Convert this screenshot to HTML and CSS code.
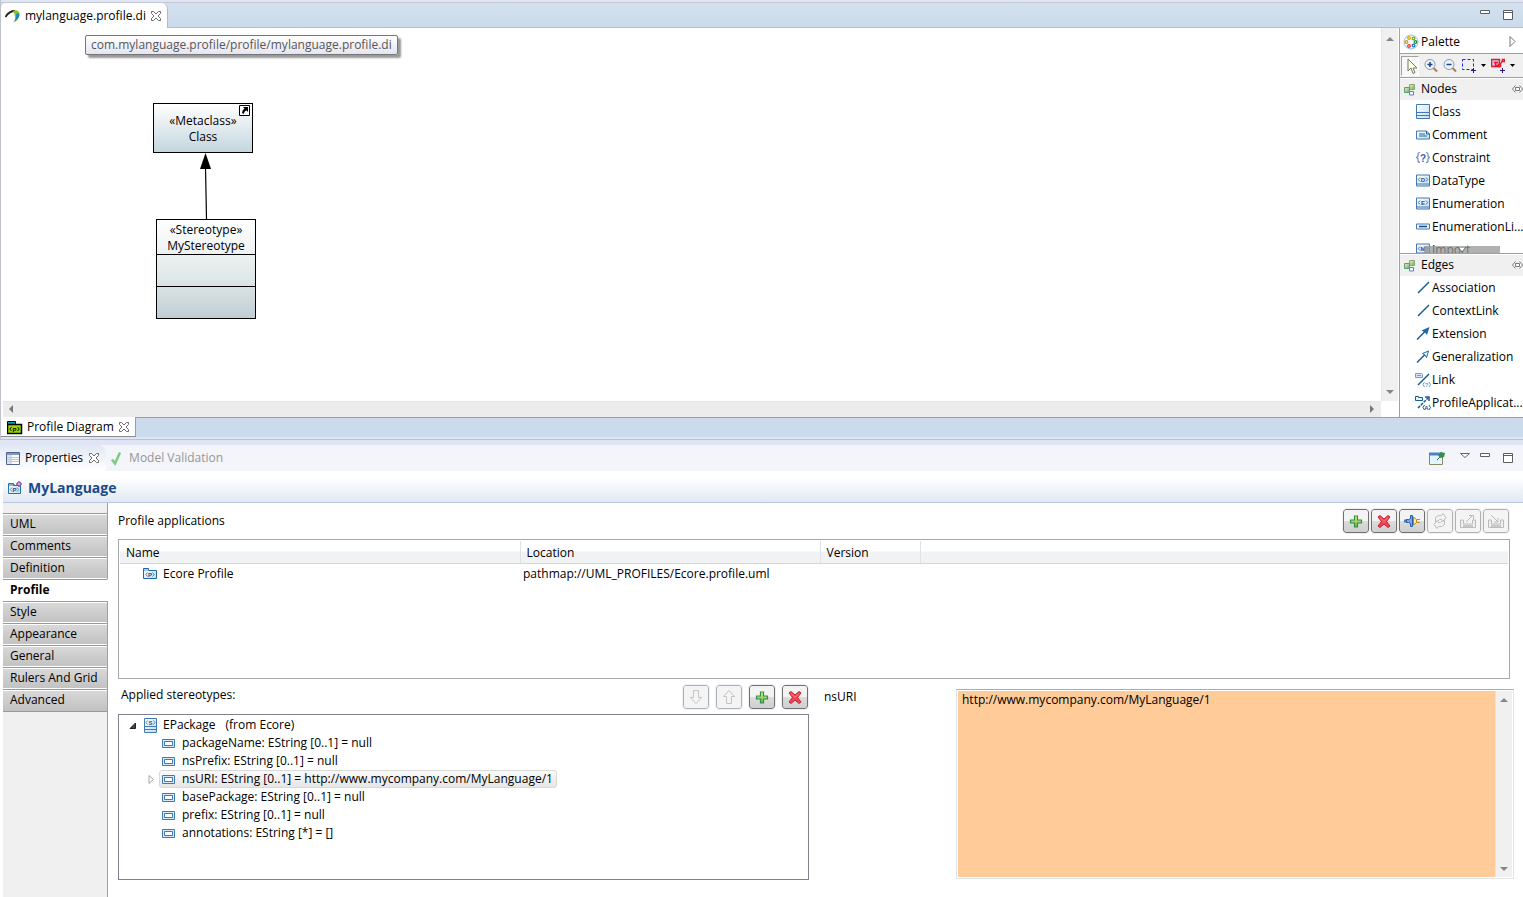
FILE: index.html
```html
<!DOCTYPE html>
<html lang="en">
<head>
<meta charset="utf-8">
<title>mylanguage.profile.di</title>
<link rel="stylesheet" href="styles.css">
</head>
<body>
<svg class="defs" aria-hidden="true">
  <defs>
    <linearGradient id="g-paper" x1="0" y1="0" x2="1" y2="1"><stop offset="0" stop-color="#fff"/><stop offset="1" stop-color="#c3dcf2"/></linearGradient>
    <linearGradient id="g-plus" x1="0" y1="0" x2="0" y2="1"><stop offset="0" stop-color="#e4ee7c"/><stop offset="1" stop-color="#6fb544"/></linearGradient>
    <linearGradient id="g-green" x1="0" y1="0" x2="1" y2="1"><stop offset="0" stop-color="#f2f3a8"/><stop offset="1" stop-color="#68a878"/></linearGradient>
  </defs>
  <symbol id="close" viewBox="0 0 12 12"><path d="M1.5 1.5h2L6 4l2.500-2.500h2v2L8 6l2.500 2.500v2h-2L6 8l-2.500 2.500h-2v-2L4 6 1.500 3.500z" fill="#fff" stroke="#6b6b6b"/></symbol>
  <symbol id="min" viewBox="0 0 12 12"><path d="M1.500 1.500h9v3h-9z" fill="#fff" stroke="#5e5e5e"/></symbol>
  <symbol id="max" viewBox="0 0 12 12"><path d="M1.500 1.500h9v9h-9zM1.500 3.500h9" fill="#fff" stroke="#5e5e5e"/></symbol>
  <symbol id="up" viewBox="0 0 8 4"><path d="M0 4L4 0l4 4z" fill="#858585"/></symbol>
  <symbol id="down" viewBox="0 0 8 4"><path d="M0 0h8L4 4z" fill="#858585"/></symbol>
  <symbol id="pin" viewBox="0 0 11 8"><path d="M3.500 .5L.5 4l3 3.500M7.500 .5l3 3.500-3 3.500M3.500 2.500h4v3h-4z" fill="#fff" stroke="#777"/></symbol>
  <symbol id="drawer" viewBox="0 0 12 13"><path d="M5.500 1.500h5v5h-5z" fill="url(#g-green)" stroke="#86ab7c"/><path d="M.5 4.500h5v5h-5z" fill="url(#g-green)" stroke="#5d9b79"/><path d="M5.500 8.500h4v3.500h-4z" fill="#eef7ff" stroke="#5d87b5"/></symbol>
  <symbol id="class" viewBox="0 0 14 15"><path d="M.5.5h13v14H.5zM.5 8.500h13M.5 11.500h13" fill="url(#g-paper)" stroke="#4379b3"/></symbol>
  <symbol id="comment" viewBox="0 0 14 14"><path d="M.5 3.500h10l3 3v5H.5z" fill="url(#g-paper)" stroke="#4379b3"/><path d="M10.500 3.500v3h3M3 6.500h6M3 8.500h8" fill="none" stroke="#1f64a0"/></symbol>
  <symbol id="literal" viewBox="0 0 14 14"><path d="M.5 4.500h13v5H.5z" fill="#eaf6ff" stroke="#4379b3"/><path d="M3 7h8" stroke="#14477c" stroke-width="1.500"/></symbol>
  <symbol id="framed" viewBox="0 0 14 14"><path d="M.5 1.500h13v11H.5zM1 10.500h12" fill="url(#g-paper)" stroke="#4379b3"/><path d="M4 4L2.300 6 4 8M10 4l1.700 2L10 8" fill="none" stroke="#244f91" stroke-width=".8"/></symbol>
  <symbol id="line" viewBox="0 0 14 14"><path d="M2 12.500L13 1.500" stroke="#155a91" stroke-width="1.500"/></symbol>
  <symbol id="extension" viewBox="0 0 14 14"><path d="M1 13L10 4" stroke="#155a91" stroke-width="1.500"/><path d="M13.500 .5L11 8.500 9 6 5.500 4z" fill="#1d68a5"/></symbol>
  <symbol id="general" viewBox="0 0 14 14"><path d="M1 13L9 5" stroke="#155a91" stroke-width="1.500"/><path d="M12.500 1.500L10.500 8 9 5.500 6.500 4z" fill="#fff" stroke="#1d68a5"/></symbol>
  <symbol id="attr" viewBox="0 0 13 9"><path d="M.5.5h12v8H.5z" fill="#d9ebfa" stroke="#3e79b3"/><path d="M2.500 2.500h8v4h-8z" fill="#fff" stroke="#3e79b3"/></symbol>
  <symbol id="plus" viewBox="0 0 14 14"><path d="M5.500 1.500h3v4h4v3h-4v4h-3v-4h-4v-3h4z" fill="url(#g-plus)" stroke="#2f9050" stroke-width="1.200"/></symbol>
  <symbol id="cross" viewBox="0 0 14 14"><path d="M1 2.500L3 1l4 3.500L11 1l2 1.500L9.500 7l3.500 4.500-2 1.500-4-3.500L3 13l-2-1.500L4.500 7z" fill="#f04452" stroke="#c91f31"/><path d="M3 3l4 4 4-4" fill="none" stroke="#f9877f"/></symbol>
  <symbol id="plug" viewBox="0 0 16 12"><path d="M0 4.500h3v3H0z" fill="#477ac4"/><path d="M2.500 4.500h2l2-1V.5h2v11h-2v-3l-2-1h-2z" fill="#7da5df" stroke="#285ba9"/><path d="M9.500 2l3 2.500v3l-3 2.500z" fill="#ffeaa0" stroke="#b9851b"/><path d="M13 4.500h3M13 7.500h3" stroke="#c48c16"/></symbol>
  <symbol id="refresh" viewBox="0 0 16 16"><path d="M3.500 8.500v-4l3-2h3l1.500-2 3 4-3 4-1.500-2h-2l-2 2zM12.500 7.500v4l-3 2h-3L5 15.500l-3-4 3-4 1.500 2h2l2-2z" fill="#f2f2f2" stroke="#bdbdbd"/></symbol>
  <symbol id="export" viewBox="0 0 16 14"><path d="M3.500 6H.5v7.500h15V6h-3v4h-9z" fill="#eee" stroke="#bcbcbc"/><path d="M3 12h10" stroke="#c8c8c8" stroke-width="2"/><path d="M6 8l7-7M9 1.500h4.500v4" fill="none" stroke="#b9b9b9"/></symbol>
  <symbol id="inport" viewBox="0 0 16 14"><path d="M3.500 6H.5v7.500h15V6h-3v4h-9z" fill="#eee" stroke="#bcbcbc"/><path d="M3 12h10" stroke="#c8c8c8" stroke-width="2"/><path d="M3 1l7 7M10 4v4H6" fill="none" stroke="#b9b9b9"/></symbol>
  <symbol id="arrow-down" viewBox="0 0 14 16"><path d="M4.500 1.500h5v7h3L7 14.500 1.500 8.500h3z" fill="#f4f4f4" stroke="#c3c3c3"/></symbol>
  <symbol id="arrow-up" viewBox="0 0 14 16"><path d="M4.500 14.500h5v-7h3L7 1.500 1.500 7.500h3z" fill="#f4f4f4" stroke="#c3c3c3"/></symbol>
</svg>

<main class="workbench">
  <section class="editor">
    <header class="strip editor-strip">
      <div class="tab tab-active">
        <svg class="logo" viewBox="0 0 16 14"><path d="M.5 8Q4 2 10 2" fill="none" stroke="#222" stroke-width="1.800"/><path d="M8 2q4-2 6 1 2 5-4 10 1-6-2-11z" fill="#8fc31e"/><path d="M14 4q2 5-6 9.500Q12 9 11 5z" fill="#178dc0"/></svg>
        <span>mylanguage.profile.di</span>
        <button class="flat" aria-label="Close editor"><svg class="i12"><use href="#close"/></svg></button>
      </div>
      <div class="window-tools">
        <button class="flat" aria-label="Minimize"><svg class="i12"><use href="#min"/></svg></button>
        <button class="flat" aria-label="Maximize"><svg class="i12"><use href="#max"/></svg></button>
      </div>
    </header>

    <div class="editor-body">
      <div class="viewport">
        <div class="canvas">
          <div class="tooltip" role="tooltip">com.mylanguage.profile/profile/mylanguage.profile.di</div>
          <div class="node metaclass"><span>«Metaclass»</span><span>Class</span>
            <svg class="shortcut" viewBox="0 0 11 11"><path d="M.5.5h10v10H.5z" fill="#fff" stroke="#000"/><path d="M4 2h5v5L7.500 5.500Q5 6 5 9L3 8q0-3 2.500-4.500z"/></svg>
          </div>
          <svg class="edge" viewBox="0 0 14 66"><path d="M6.500 14L7.500 66" stroke="#000" stroke-width="1.200"/><path d="M6.500 0L12 16H1z"/></svg>
          <div class="node stereotype">
            <div class="node-title"><span>«Stereotype»</span><span>MyStereotype</span></div>
            <div class="compartment"></div>
            <div class="compartment"></div>
          </div>
        </div>
        <div class="vscroll"><svg class="arrow"><use href="#up"/></svg><svg class="arrow"><use href="#down"/></svg></div>
        <div class="hscroll"><svg class="side" viewBox="0 0 4 8"><path d="M4 0v8L0 4z" fill="#777"/></svg><svg class="side" viewBox="0 0 4 8"><path d="M0 0v8l4-4z" fill="#777"/></svg></div>
      </div>

      <aside class="palette">
        <div class="palette-title">
          <svg class="i16" viewBox="0 0 16 16"><circle cx="8" cy="8" r="7" fill="#f4f9ff" stroke="#9bbce0"/><g fill="#fff" stroke-width="1.300"><circle cx="6" cy="4" r="1.300" stroke="#e8a000"/><circle cx="10.500" cy="4.500" r="1.300" stroke="#77b300"/><circle cx="3.500" cy="8" r="1.300" stroke="#e99b00"/><circle cx="12.500" cy="8" r="1.300" stroke="#23903a"/><circle cx="6" cy="12" r="1.300" stroke="#e33b20"/><circle cx="10.500" cy="11.500" r="1.300" stroke="#2772c4"/></g></svg>
          <span>Palette</span>
          <svg class="reveal" viewBox="0 0 7 11"><path d="M1 .5l5 5-5 5z" fill="#fff" stroke="#777"/></svg>
        </div>
        <div class="palette-tools">
          <button class="flat select-tool" aria-label="Select"><svg viewBox="0 0 12 17"><path d="M2 1v12l3-3 2 5.500 2-1-2-4.500h4z" fill="#ffffe2" stroke="#77776b"/></svg></button>
          <button class="flat" aria-label="Zoom in"><svg class="i14" viewBox="0 0 14 14"><path d="M9 9l4 4" stroke="#a77f4f" stroke-width="2"/><circle cx="6" cy="6" r="5" fill="#eaf4ff" stroke="#8b99aa"/><path d="M3.500 6h5M6 3.500v5" stroke="#213d82" stroke-width="1.500"/></svg></button>
          <button class="flat" aria-label="Zoom out"><svg class="i14" viewBox="0 0 14 14"><path d="M9 9l4 4" stroke="#a77f4f" stroke-width="2"/><circle cx="6" cy="6" r="5" fill="#eaf4ff" stroke="#8b99aa"/><path d="M3.500 6h5" stroke="#213d82" stroke-width="1.500"/></svg></button>
          <button class="flat" aria-label="Marquee"><svg class="i14" viewBox="0 0 14 15"><path d="M.5 1.500h11v10H.5z" fill="none" stroke="#1927f5" stroke-dasharray="3 2"/><path d="M9 12.500h5M11.500 10v5" stroke="#2a1581"/></svg></button>
          <svg class="caret" viewBox="0 0 5 3"><path d="M0 0h5L2.500 3z"/></svg>
          <button class="flat" aria-label="Custom tool"><svg class="i14" viewBox="0 0 14 15"><path d="M.5 1.500h8v7h-8z" fill="#c9bce8" stroke="#f01425" stroke-width="1.400"/><path d="M3 4.500h4M4.500 4.500v3h4l3-5" fill="none" stroke="#f01425" stroke-width="1.400"/><path d="M11.500 1.500h2v2h-2zM7.500 6.500h2v2h-2z" fill="#fff" stroke="#f01425" stroke-width="1.400"/><path d="M9 12.500h5M11.500 10v5" stroke="#2a1581"/></svg></button>
          <svg class="caret" viewBox="0 0 5 3"><path d="M0 0h5L2.500 3z"/></svg>
        </div>
        <div class="drawer drawer-nodes">
          <h2 class="drawer-title"><svg class="drawer-icon"><use href="#drawer"/></svg><span>Nodes</span><svg class="pin"><use href="#pin"/></svg></h2>
          <ul class="entries">
            <li><svg class="i14"><use href="#class"/></svg>Class</li>
            <li><svg class="i14"><use href="#comment"/></svg>Comment</li>
            <li><svg class="i14" viewBox="0 0 14 14"><path d="M4 2q-2 0-2 2v2L.5 7 2 8v2q0 2 2 2M10 2q2 0 2 2v2l1.500 1L12 8v2q0 2-2 2" fill="none" stroke="#6f8fc6" stroke-width="1.200"/><text x="7" y="11" class="glyph glyph-lg">?</text></svg>Constraint</li>
            <li><svg class="i14" viewBox="0 0 14 14"><use href="#framed"/><text x="7" y="8" class="glyph">D</text></svg>DataType</li>
            <li><svg class="i14" viewBox="0 0 14 14"><use href="#framed"/><text x="7" y="8" class="glyph">E</text></svg>Enumeration</li>
            <li><svg class="i14"><use href="#literal"/></svg>EnumerationLi...</li>
            <li><svg class="i14" viewBox="0 0 14 14"><use href="#framed"/><text x="7" y="8" class="glyph">M</text></svg>Import</li>
          </ul>
          <div class="more"><svg viewBox="0 0 8 5"><path d="M0 0h8L4 5z" fill="#fff" stroke="#666"/></svg></div>
        </div>
        <div class="drawer drawer-edges">
          <h2 class="drawer-title"><svg class="drawer-icon"><use href="#drawer"/></svg><span>Edges</span><svg class="pin"><use href="#pin"/></svg></h2>
          <ul class="entries">
            <li><svg class="i14"><use href="#line"/></svg>Association</li>
            <li><svg class="i14"><use href="#line"/></svg>ContextLink</li>
            <li><svg class="i14"><use href="#extension"/></svg>Extension</li>
            <li><svg class="i14"><use href="#general"/></svg>Generalization</li>
            <li><svg class="i16" viewBox="0 0 16 16"><path d="M.5 1.500h6l1 1v3h-7zM2 3.500h4" fill="#dbe8fa" stroke="#7598cd"/><path d="M3 13L14 2" stroke="#155a91" stroke-width="1.500"/><path d="M9.500 10L8 12.500 9.500 15M14 10l1.500 2.500L14 15" fill="none" stroke="#7598cd"/><text x="11.500" y="15" class="glyph glyph-pale">?</text></svg>Link</li>
            <li><svg class="i16" viewBox="0 0 16 16"><path d="M.5 5.500v-4h3v1h4v3z" fill="#eaf6ff" stroke="#155a91"/><path d="M3 13L13 3" stroke="#155a91" stroke-width="1.500" stroke-dasharray="3 1"/><path d="M10 2h4v4" fill="none" stroke="#155a91" stroke-width="1.500"/><path d="M9.500 10L8 12.500 9.500 15M14 10l1.500 2.500L14 15" fill="none" stroke="#155a91"/><text x="11.500" y="15" class="glyph">A</text></svg>ProfileApplicat...</li>
          </ul>
        </div>
      </aside>
    </div>

    <footer class="page-tabs">
      <div class="page-tab">
        <svg class="i16" viewBox="0 0 16 14"><path d="M.5 13.500v-12h8v3" fill="#0c9cab" stroke="#000"/><path d="M.5 4.500h14v9H.5z" fill="#9bd800" stroke="#000" stroke-width="1.500"/><path d="M4.500 7L2.800 9l1.700 2M10.500 7l1.700 2-1.700 2" fill="none" stroke="#000"/><text x="7.500" y="11.500" class="glyph glyph-dark">P</text></svg>
        <span>Profile Diagram</span>
        <button class="flat" aria-label="Close diagram"><svg class="i12"><use href="#close"/></svg></button>
      </div>
    </footer>
  </section>

  <section class="properties">
    <header class="strip props-strip">
      <div class="tab props-tab">
        <svg class="i14" viewBox="0 0 14 13"><path d="M.5.5h13v12H.5z" fill="#fff" stroke="#53648c"/><path d="M1 1h12v2H1z" fill="#8196bd"/><path d="M1 3h4v9H1z" fill="#dbe4f2"/><path d="M1 5.500h12M1 7.500h12M1 9.500h12M5 3v9" stroke="#bac8dc"/></svg>
        <span>Properties</span>
        <button class="flat" aria-label="Close properties"><svg class="i12"><use href="#close"/></svg></button>
      </div>
      <div class="tab idle-tab">
        <svg class="i14" viewBox="0 0 14 14"><path d="M2 8l3 4L10 1" fill="none" stroke="#7bcd80" stroke-width="2.500"/></svg>
        <span>Model Validation</span>
      </div>
      <div class="window-tools">
        <button class="flat" aria-label="Pin view"><svg class="new-view" viewBox="0 0 16 15"><path d="M.5 2.500h13v11H.5z" fill="#e2f6ff" stroke="#8b8962"/><path d="M0 3h12" stroke="#4883ca" stroke-width="3"/><path d="M8 9l4-4" stroke="#456"/><path d="M9 4l3-3 4 1-1 4-4 1z" fill="#368d46"/></svg></button>
        <button class="flat view-menu" aria-label="View menu"><svg class="i12" viewBox="0 0 12 12"><path d="M1.500 1.500h9L6 5.500z" fill="#fff" stroke="#666"/></svg></button>
        <button class="flat" aria-label="Minimize"><svg class="i12"><use href="#min"/></svg></button>
        <button class="flat" aria-label="Maximize"><svg class="i12"><use href="#max"/></svg></button>
      </div>
    </header>
    <div class="title-bar">
      <svg class="i16" viewBox="0 0 16 16"><path d="M1.500 13.500v-10h5v2h7v8z" fill="url(#g-paper)" stroke="#2872ac"/><path d="M2 5h6" stroke="#2872ac"/><path d="M5 7.500L3.300 9.500 5 11.500M10 7.500l1.700 2-1.700 2" fill="none" stroke="#2872ac" stroke-width=".8"/><text x="7.500" y="12" class="glyph">P</text><path d="M12 1v6M9 4h6" stroke="#823f90"/><circle cx="12" cy="4" r="2" fill="#d6add9" stroke="#823f90"/></svg>
      <h1>MyLanguage</h1>
    </div>
    <div class="props-body">
      <nav class="side-tabs">
        <button>UML</button><button>Comments</button><button>Definition</button><button class="current" aria-current="page">Profile</button><button>Style</button><button>Appearance</button><button>General</button><button>Rulers And Grid</button><button>Advanced</button>
      </nav>
      <div class="form">
        <div class="form-row upper-row">
          <h2>Profile applications</h2>
          <div class="actions actions-tight">
            <button aria-label="Apply profile"><svg class="i14"><use href="#plus"/></svg></button>
            <button aria-label="Unapply profile"><svg class="i14"><use href="#cross"/></svg></button>
            <button aria-label="Apply registered profile"><svg class="i16"><use href="#plug"/></svg></button>
            <button disabled aria-label="Refresh profile"><svg class="i16"><use href="#refresh"/></svg></button>
            <button disabled aria-label="Export"><svg class="i16"><use href="#export"/></svg></button>
            <button disabled aria-label="Import"><svg class="i16"><use href="#inport"/></svg></button>
          </div>
        </div>
        <div class="table-box">
          <table>
            <colgroup><col class="col-name"><col class="col-location"><col class="col-version"><col></colgroup>
            <thead><tr><th>Name</th><th>Location</th><th>Version</th><th></th></tr></thead>
            <tbody><tr><td><span class="cell"><svg class="i14" viewBox="0 0 14 13"><path d="M.5 11.500V1.500h5v2h8v8z" fill="url(#g-paper)" stroke="#1e69a5"/><path d="M1 3h5" stroke="#5f9bcc"/><path d="M4.500 5.500L2.800 7.500l1.700 2M9.500 5.500l1.700 2-1.700 2" fill="none" stroke="#2872ac" stroke-width=".8"/><text x="7" y="10" class="glyph">P</text></svg>Ecore Profile</span></td><td>pathmap://UML_PROFILES/Ecore.profile.uml</td><td></td><td></td></tr></tbody>
          </table>
        </div>
        <div class="lower">
          <div class="stereotypes">
            <div class="form-row lower-row">
              <h2>Applied stereotypes:</h2>
              <div class="actions">
                <button disabled aria-label="Move down"><svg class="i16"><use href="#arrow-down"/></svg></button>
                <button disabled aria-label="Move up"><svg class="i16"><use href="#arrow-up"/></svg></button>
                <button aria-label="Apply stereotype"><svg class="i14"><use href="#plus"/></svg></button>
                <button aria-label="Unapply stereotype"><svg class="i14"><use href="#cross"/></svg></button>
              </div>
            </div>
            <ul class="tree">
              <li class="root"><svg class="twist" viewBox="0 0 7 7"><path d="M6.500 1v5.500H1z" fill="#444" stroke="#222"/></svg><span class="root-label"><svg class="stereo-icon" viewBox="0 0 13 15"><path d="M.5.5h12v14H.5zM.5 8.500h12M.5 11.500h12" fill="url(#g-paper)" stroke="#4379b3"/><path d="M3.500 2.500L2 4.500l1.500 2M9.500 2.500l1.500 2-1.500 2" fill="none" stroke="#2872ac" stroke-width=".8"/><text x="6.500" y="7" class="glyph">S</text></svg><span>EPackage</span><span>(from Ecore)</span></span></li>
              <li><span class="item"><svg class="attr"><use href="#attr"/></svg>packageName: EString [0..1] = null</span></li>
              <li><span class="item"><svg class="attr"><use href="#attr"/></svg>nsPrefix: EString [0..1] = null</span></li>
              <li class="expandable"><svg class="twist" viewBox="0 0 7 9"><path d="M1 .5l4.500 4-4.500 4z" fill="#fff" stroke="#a5a5a5"/></svg><span class="item selected"><svg class="attr"><use href="#attr"/></svg>nsURI: EString [0..1] = http://www.mycompany.com/MyLanguage/1</span></li>
              <li><span class="item"><svg class="attr"><use href="#attr"/></svg>basePackage: EString [0..1] = null</span></li>
              <li><span class="item"><svg class="attr"><use href="#attr"/></svg>prefix: EString [0..1] = null</span></li>
              <li><span class="item"><svg class="attr"><use href="#attr"/></svg>annotations: EString [*] = []</span></li>
            </ul>
          </div>
          <label class="value-label" for="nsuri">nsURI</label>
          <div class="value-box">
            <textarea id="nsuri" spellcheck="false">http://www.mycompany.com/MyLanguage/1</textarea>
            <div class="vscroll"><svg class="arrow"><use href="#up"/></svg><svg class="arrow"><use href="#down"/></svg></div>
          </div>
        </div>
      </div>
    </div>
  </section>
</main>
</body>
</html>
```

FILE: styles.css
```css
* { box-sizing: border-box; }

body {
  margin: 0;
  background: #dfe5f5;
  color: #000;
  font: 12px/16px "Open Sans", "Noto Sans", sans-serif;
}

svg { display: block; flex: none; }
h1, h2, ul { margin: 0; padding: 0; font-weight: normal; list-style: none; }
h2 { font-size: 12px; }
button, textarea { font: inherit; color: inherit; }

.defs { position: absolute; width: 0; height: 0; }
.i12 { width: 12px; height: 12px; }
.i14 { width: 14px; height: 15px; }
.i16 { width: 16px; height: 16px; }
.flat { display: block; padding: 0; border: 0; background: none; }
.glyph { font: bold 6px "Liberation Sans", sans-serif; fill: #244f91; text-anchor: middle; }
.glyph-lg { font-size: 10px; fill: #3c5ea5; }
.glyph-pale { fill: #7598cd; }
.glyph-dark { fill: #000; }

.workbench {
  display: grid;
  grid-template-rows: 440fr 452fr;
  gap: 5px;
  min-height: 100vh;
}

.editor {
  display: flex;
  flex-direction: column;
  min-width: 0;
  padding: 2px 0;
  border-bottom: 1px solid #bfc1cc;
  border-left: 1px solid #bfc1cc;
}

.strip { display: flex; align-items: center; flex: none; height: 26px; }
.editor-strip {
  border-top: 1px solid #c4c9d4;
  border-bottom: 1px solid #b0bcd2;
  background: linear-gradient(#d3e0f0, #cbdbeb);
}
.tab { display: flex; align-items: center; gap: 5px; height: 26px; }
.tab-active {
  gap: 4px;
  margin-bottom: -1px;
  padding: 0 5px 0 4px;
  border-right: 1px solid #b0bcd2;
  border-radius: 5px 6px 0 0;
  background: #fff;
}
.logo { width: 16px; height: 14px; }
.window-tools { display: flex; gap: 11px; margin-left: auto; padding-right: 9px; }

.editor-body { display: flex; flex: 1; min-height: 0; background: #fff; }
.viewport {
  display: grid;
  flex: 1;
  grid-template: 1fr 16px / 1fr 17px;
  min-width: 0;
  padding: 0 1px 0 2px;
}
.canvas { position: relative; }
.vscroll {
  display: flex;
  flex-direction: column;
  align-items: center;
  justify-content: space-between;
  padding: 9px 0 7px;
  border-left: 1px solid #e4e4e4;
  background: #f0f0f0;
}
.hscroll {
  display: flex;
  align-items: center;
  justify-content: space-between;
  padding: 0 7px 2px 6px;
  border-top: 1px solid #e4e4e4;
  background: #ececec;
}
.arrow { width: 8px; height: 4px; }
.side { width: 4px; height: 8px; }

.tooltip {
  position: absolute;
  top: 7px;
  left: 82px;
  padding: 1px 5px;
  border: 1px solid #767676;
  border-radius: 2px;
  background: linear-gradient(#fff, #e4e5f0);
  box-shadow: 3px 3px 2px #999;
  color: #575757;
  white-space: nowrap;
}
.node {
  position: absolute;
  display: flex;
  flex-direction: column;
  width: 100px;
  border: 1px solid #000;
  text-align: center;
}
.metaclass {
  top: 75px;
  left: 150px;
  height: 50px;
  padding-top: 9px;
  background: linear-gradient(#fff, #c3d6de);
}
.shortcut { position: absolute; top: 1px; right: 2px; width: 11px; height: 11px; }
.edge { position: absolute; top: 125px; left: 196px; width: 14px; height: 66px; }
.stereotype {
  top: 191px;
  left: 153px;
  height: 100px;
  background: linear-gradient(#fff, #dfe7e8 60%, #c0ced4);
}
.node-title { display: flex; flex-direction: column; height: 34px; padding-top: 2px; }
.compartment { flex: 1; border-top: 1px solid #000; }

.palette {
  display: flex;
  flex: none;
  flex-direction: column;
  width: 124px;
  border-left: 1px solid #a0a0a0;
  white-space: nowrap;
}
.palette-title {
  display: flex;
  align-items: center;
  gap: 2px;
  height: 26px;
  padding: 2px 7px 0 3px;
  border-bottom: 1px solid #a0a0a0;
}
.reveal { width: 7px; height: 11px; margin-left: auto; }
.palette-tools {
  display: flex;
  align-items: center;
  gap: 5px;
  height: 24px;
  padding-left: 1px;
  border-bottom: 1px solid #a0a0a0;
  background: #f0f0f0;
}
.select-tool {
  width: 18px;
  height: 20px;
  padding: 1px 0 0 4px;
  border: 1px solid #a0a0a0;
  border-right-color: #fff;
  border-bottom-color: #fff;
  background: #f8f8f8;
}
.select-tool svg { width: 12px; height: 17px; }
.caret { width: 5px; height: 3px; }
.drawer { flex: none; }
.drawer-nodes {
  position: relative;
  flex: 1 1 0;
  min-height: 0;
  overflow: hidden;
  border-bottom: 1px solid #a0a0a0;
}
.drawer-edges { padding-bottom: 3px; }
.drawer-title {
  display: flex;
  align-items: center;
  gap: 5px;
  height: 22px;
  padding: 0 0 1px 4px;
  border-top: 1px solid #fff;
  background: #f0f0f0;
}
.drawer-icon { width: 12px; height: 13px; }
.pin { width: 11px; height: 8px; margin-left: auto; }
.entries li { display: flex; align-items: center; gap: 2px; height: 23px; padding-left: 16px; }
.entries .i16 { margin: 0 -1px; }
.more {
  position: absolute;
  bottom: 0;
  left: 24px;
  display: flex;
  justify-content: center;
  width: 76px;
  height: 7px;
  padding-top: 1px;
  background: rgb(150 150 150 / 75%);
}
.more svg { width: 8px; height: 5px; }

.page-tabs {
  display: flex;
  flex: none;
  height: 20px;
  border-top: 1px solid #a0a0a0;
  background: #cbdbeb;
}
.page-tab {
  display: flex;
  align-items: center;
  gap: 4px;
  margin-top: -1px;
  padding: 0 5px 0 6px;
  border-right: 1px solid #9a9da5;
  border-bottom: 1px solid #8c8c8c;
  background: #fff;
}

.properties { display: flex; flex-direction: column; min-width: 0; background: #fff; }
.props-strip { background: #f3f5fb; }
.props-tab {
  padding: 0 6px;
  border-radius: 0 8px 0 0;
  background: linear-gradient(#e0e8f4, #fff);
}
.idle-tab { padding-left: 4px; color: #969696; }
.new-view { width: 16px; height: 15px; }
.view-menu { margin: 0 -3px 0 3px; }
.title-bar {
  display: flex;
  align-items: center;
  gap: 5px;
  height: 32px;
  margin-left: 3px;
  padding: 2px 0 0 4px;
  border-bottom: 1px solid #b5c7e2;
  background: linear-gradient(#fff 20%, #e1e8f2);
}
h1 { color: #1b4a8b; font-size: 14px; font-weight: bold; }

.props-body { display: flex; flex: 1; }
.side-tabs {
  display: flex;
  flex: none;
  flex-direction: column;
  width: 105px;
  margin-left: 3px;
  padding-top: 10px;
  background: linear-gradient(#a0a0a0, #a0a0a0) right / 1px 100% no-repeat #f0f0f0;
}
.side-tabs button {
  height: 22px;
  padding: 0 7px 2px;
  border: 0;
  border-top: 1px solid #999;
  border-right: 1px solid #a0a0a0;
  background: linear-gradient(#d9d9d9, #c1c1c1);
  box-shadow: inset 0 1px #fff, inset 0 -1px #fff;
  text-align: left;
}
.side-tabs button:last-child { box-shadow: inset 0 1px #fff, 0 1px #999; }
.side-tabs .current { border-right-color: #fff; background: #fff; font-weight: bold; }

.form { flex: 1; min-width: 0; padding: 5px 9px 17px 10px; }
.form-row { display: flex; align-items: center; justify-content: space-between; height: 26px; }
.upper-row { padding-right: 5px; }
.actions { display: flex; gap: 7px; }
.actions-tight { gap: 2px; }
.actions button {
  display: flex;
  align-items: center;
  justify-content: center;
  width: 26px;
  height: 24px;
  padding: 0;
  border: 1px solid #707070;
  border-radius: 3px;
  outline: 1px solid #f0f0f0;
  background: linear-gradient(#f3f3f3 50%, #dcdcdc 50%, #cfcfcf);
}
.actions button:disabled { border-color: #adb2b5; background: #f4f4f4; }

.table-box { height: 140px; margin: 5px 4px 0 0; padding: 1px; border: 1px solid #a6a8b0; }
table { width: 100%; border-collapse: collapse; table-layout: fixed; }
.col-name { width: 400px; }
.col-location { width: 300px; }
.col-version { width: 100px; }
th {
  height: 22px;
  padding: 2px 6px 0;
  border-right: 1px solid #e0e2e6;
  border-bottom: 1px solid #d5d5d5;
  background: linear-gradient(#fff 45%, #f1f2f4 50%);
  font-weight: normal;
  text-align: left;
}
th:last-child { border-right: 0; }
td { height: 21px; padding: 0 3px; }
.cell { display: flex; align-items: center; gap: 6px; padding-left: 20px; }

.lower { display: grid; grid-template-columns: 691fr 147px 558fr; margin-top: 5px; }
.lower-row { padding-right: 1px; }
.lower-row h2 { padding: 0 0 4px 3px; }
.tree { height: 166px; margin-top: 4px; padding: 1px 0; border: 1px solid #7f828b; white-space: nowrap; }
.tree li { display: flex; align-items: center; height: 18px; padding-left: 40px; }
.tree .root { padding-left: 10px; }
.tree .expandable { padding-left: 29px; }
.twist { width: 7px; height: 9px; margin-right: 4px; }
.root-label { display: flex; align-items: center; gap: 10px; padding-left: 4px; }
.stereo-icon { width: 13px; height: 15px; margin-right: -4px; }
.item { display: flex; align-items: center; gap: 7px; height: 18px; padding: 0 3px 0 2px; border: 1px solid transparent; border-radius: 3px; }
.selected { border-color: #d9d9d9; background: linear-gradient(#fafafa, #e6e6e6); }
.attr { width: 13px; height: 9px; }
.value-label { padding: 5px 0 0 15px; }
.value-box {
  display: flex;
  height: 190px;
  margin-top: 5px;
  padding: 1px;
  border: 1px solid #e0e5ec;
  border-top-color: #a9abb3;
}
textarea {
  flex: 1;
  min-width: 0;
  padding: 1px 4px;
  border: 0;
  background: #ffcb99;
  resize: none;
}
.value-box .vscroll { width: 17px; padding: 7px 0 6px; }
```
